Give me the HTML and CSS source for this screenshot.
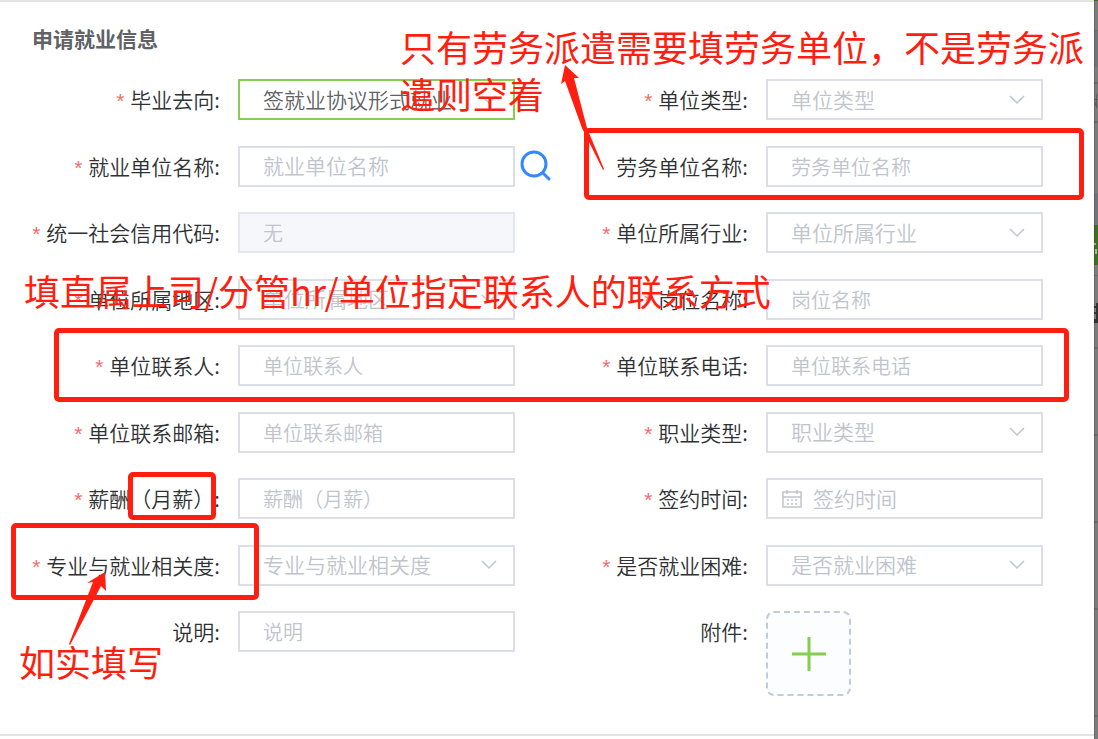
FILE: index.html
```html
<!DOCTYPE html>
<html lang="zh-CN">
<head>
  <meta charset="UTF-8">
  <meta name="viewport" content="width=device-width, initial-scale=1">
  <title>申请就业信息</title>
  <link rel="stylesheet" href="styles.css">
</head>
<body>
  <div class="page">
    <main class="dialog">
      <h1 class="title">申请就业信息</h1>
      <form class="form">
        <div class="item">
          <label class="required" for="direction">毕业去向:</label>
          <div class="control">
            <select id="direction" class="active"><option>签就业协议形式就业</option></select>
            <svg class="arrow" viewBox="0 0 16 10"><path d="M1 1l7 7 7-7"/></svg>
          </div>
        </div>
        <div class="item">
          <label class="required" for="unit-type">单位类型:</label>
          <div class="control">
            <select id="unit-type"><option>单位类型</option></select>
            <svg class="arrow" viewBox="0 0 16 10"><path d="M1 1l7 7 7-7"/></svg>
          </div>
        </div>

        <div class="item">
          <label class="required" for="unit-name">就业单位名称:</label>
          <div class="control"><input id="unit-name" class="wide" type="text" placeholder="就业单位名称"></div>
          <button class="search" type="button" aria-label="搜索">
            <svg viewBox="0 0 32 32"><circle cx="14" cy="14" r="12"/><path d="M23 23l6 6"/></svg>
          </button>
        </div>
        <div class="item">
          <label for="labor-name">劳务单位名称:</label>
          <div class="control"><input id="labor-name" type="text" placeholder="劳务单位名称"></div>
        </div>

        <div class="item">
          <label class="required" for="credit-code">统一社会信用代码:</label>
          <div class="control"><input id="credit-code" type="text" placeholder="无" disabled></div>
        </div>
        <div class="item">
          <label class="required" for="industry">单位所属行业:</label>
          <div class="control">
            <select id="industry"><option>单位所属行业</option></select>
            <svg class="arrow" viewBox="0 0 16 10"><path d="M1 1l7 7 7-7"/></svg>
          </div>
        </div>

        <div class="item">
          <label class="required" for="region">单位所属地区:</label>
          <div class="control">
            <select id="region"><option>单位所属地区</option></select>
            <svg class="arrow" viewBox="0 0 16 10"><path d="M1 1l7 7 7-7"/></svg>
          </div>
        </div>
        <div class="item">
          <label class="required" for="job-name">岗位名称:</label>
          <div class="control"><input id="job-name" type="text" placeholder="岗位名称"></div>
        </div>

        <div class="item">
          <label class="required" for="contact">单位联系人:</label>
          <div class="control"><input id="contact" type="text" placeholder="单位联系人"></div>
        </div>
        <div class="item">
          <label class="required" for="phone">单位联系电话:</label>
          <div class="control"><input id="phone" type="text" placeholder="单位联系电话"></div>
        </div>

        <div class="item">
          <label class="required" for="email">单位联系邮箱:</label>
          <div class="control"><input id="email" type="text" placeholder="单位联系邮箱"></div>
        </div>
        <div class="item">
          <label class="required" for="job-type">职业类型:</label>
          <div class="control">
            <select id="job-type"><option>职业类型</option></select>
            <svg class="arrow" viewBox="0 0 16 10"><path d="M1 1l7 7 7-7"/></svg>
          </div>
        </div>

        <div class="item">
          <label class="required" for="salary">薪酬（月薪）:</label>
          <div class="control"><input id="salary" type="text" placeholder="薪酬（月薪）"></div>
        </div>
        <div class="item">
          <label class="required" for="sign-date">签约时间:</label>
          <div class="control">
            <input id="sign-date" class="date" type="text" placeholder="签约时间">
            <svg class="calendar" viewBox="0 0 20 20"><path d="M1 3h18v15H1zM1 8h18M5 1v4M15 1v4M5 11h2M9 11h2M13 11h2M5 15h2M9 15h2M13 15h2"/></svg>
          </div>
        </div>

        <div class="item">
          <label class="required" for="relevance">专业与就业相关度:</label>
          <div class="control">
            <select id="relevance"><option>专业与就业相关度</option></select>
            <svg class="arrow" viewBox="0 0 16 10"><path d="M1 1l7 7 7-7"/></svg>
          </div>
        </div>
        <div class="item">
          <label class="required" for="difficulty">是否就业困难:</label>
          <div class="control">
            <select id="difficulty"><option>是否就业困难</option></select>
            <svg class="arrow" viewBox="0 0 16 10"><path d="M1 1l7 7 7-7"/></svg>
          </div>
        </div>

        <div class="item">
          <label for="remark">说明:</label>
          <div class="control"><input id="remark" type="text" placeholder="说明"></div>
        </div>
        <div class="item">
          <label for="attachment">附件:</label>
          <div class="control">
            <button id="attachment" class="upload" type="button" aria-label="上传附件">
              <svg viewBox="0 0 36 36"><path d="M18 1v34M1 18h34"/></svg>
            </button>
          </div>
        </div>
      </form>
    </main>

    <!-- strip of the dimmed page behind the dialog -->
    <svg class="backdrop" viewBox="0 0 4 739" preserveAspectRatio="none">
      <path fill="#7c7c7c" d="M0 0h4v739H0z"/>
      <path fill="#3f7020" d="M0 0h4v1H0zM0 225h4v40H0z"/>
      <path fill="#70757b" d="M0 31h4v36H0zM0 193h4v32H0z"/>
      <path fill="#6c6c6c" d="M0 30h4v1H0zM0 82h4v2H0zM0 121h4v2H0zM0 275h4v1H0zM0 347h4v2H0zM0 434h4v2H0zM0 521h4v2H0zM0 608h4v2H0zM0 715h4v2H0z"/>
      <path fill="#5c5d60" d="M2 94h1v14H2zM0 99h4v1H0zM1 102h1v4H1z"/>
      <path fill="#a5b79b" d="M0 243h2v2H0zM1 249h2v5H1z"/>
      <path fill="#333" d="M2 303h2v20H2zM0 306h4v2H0zM0 312h4v2H0zM0 319h3v4H0z"/>
      <path fill="#000" fill-opacity=".15" d="M0 0h1v739H0z"/>
    </svg>

    <!-- notes over the form -->
    <div class="frame frame-labor"></div>
    <div class="frame frame-contact"></div>
    <div class="frame frame-salary"></div>
    <div class="frame frame-relevance"></div>
    <svg class="pointer pointer-labor" viewBox="0 0 44 105"><path d="M5 0L19 13 14 13 27 63 44 104 43 105 22 63 5 16 1 19z"/></svg>
    <svg class="pointer pointer-relevance" viewBox="0 0 38 74"><path d="M36 1L37 20 32 15 1 74 0 73 24 11 18 12z"/></svg>
    <p class="note note-labor">只有劳务派遣需要填劳务单位，不是劳务派<br>遣则空着</p>
    <p class="note note-contact">填直属上司/分管hr/单位指定联系人的联系方式</p>
    <p class="note note-relevance">如实填写</p>
  </div>
</body>
</html>
```
FILE: styles.css
```css
* {
  margin: 0;
  padding: 0;
  box-sizing: border-box;
}
body {
  font-family: "Noto Sans CJK SC", sans-serif;
  font-size: 21px;
  font-weight: 350;
  color: #303133;
  background: #fff;
}
.page {
  position: relative;
  display: flex;
  min-height: 100vh;
}
.dialog {
  flex: 1;
  display: flex;
  flex-direction: column;
  margin-bottom: 3px;
  padding: 22px 28px 38px 10px;
  border-top: 2px solid #e4e4e4;
  border-bottom: 2px solid #e4e4e4;
}
.title {
  margin: 0 0 27px 22px;
  font-size: 21px;
  line-height: 28px;
  font-weight: bold;
  color: #606266;
}
.backdrop {
  width: 4px;
  align-self: stretch;
  flex: none;
}

/* Form grid */
.form {
  flex: 1;
  display: grid;
  grid-template-columns: 1fr 1fr;
  grid-template-rows: repeat(8, 1fr) auto;
}
.item {
  display: grid;
  grid-template-columns: 228px 1fr 23px;
  align-items: start;
}
.item label {
  padding-right: 18px;
  line-height: 40px;
  text-align: right;
  white-space: nowrap;
}
.required::before {
  content: "*";
  margin-right: 6px;
  font-family: "Liberation Sans", sans-serif;
  color: #f56c6c;
}
.control {
  display: grid;
  align-items: center;
}
.control > * {
  grid-area: 1 / 1;
}
input, select {
  width: 100%;
  height: 41px;
  padding: 0 23px 2px;
  border: 2px solid #dcdfe6;
  border-radius: 0;
  background: #fff;
  font: inherit;
  color: #c0c4cc;
  appearance: none;
  outline: none;
}
input {
  padding-bottom: 0;
  font-size: 20px;
  color: #606266;
}
input.wide, input.date {
  padding-bottom: 2px;
  font-size: 21px;
}
input.date {
  padding-left: 45px;
}
input::placeholder {
  color: #c0c4cc;
  opacity: 1;
}
input:disabled {
  background: #f5f7fa;
  border-color: #e4e7ed;
}
select.active {
  border-color: #85ce4f;
  color: #606266;
}
.arrow, .calendar {
  fill: none;
  stroke: #c0c4cc;
  stroke-width: 1.5;
  pointer-events: none;
}
.arrow {
  width: 16px;
  height: 10px;
  margin-right: 18px;
  justify-self: end;
}
.calendar {
  width: 20px;
  height: 20px;
  margin-left: 16px;
}
.search {
  width: 32px;
  height: 32px;
  margin: 4px 0 0 5px;
  border: 0;
  background: none;
}
.search svg {
  display: block;
  fill: none;
  stroke: #3487ff;
  stroke-width: 3;
  stroke-linecap: round;
}
.upload {
  display: flex;
  align-items: center;
  justify-content: center;
  width: 85px;
  height: 85px;
  border: 2px dashed #c0ccda;
  border-radius: 8px;
  background: #fbfdff;
}
.upload svg {
  width: 36px;
  height: 36px;
  stroke: #85ce4f;
  stroke-width: 3;
}

/* Red notes */
.frame {
  position: absolute;
  border: 5px solid #ff1e10;
  border-radius: 5px;
}
.frame-labor {
  left: 584px;
  top: 128px;
  width: 500px;
  height: 72px;
}
.frame-contact {
  left: 54px;
  top: 328px;
  width: 1015px;
  height: 74px;
}
.frame-salary {
  left: 128px;
  top: 472px;
  width: 88px;
  height: 48px;
}
.frame-relevance {
  left: 11px;
  top: 523px;
  width: 248px;
  height: 77px;
}
.pointer {
  position: absolute;
  fill: #ff1e10;
}
.pointer-labor {
  left: 560px;
  top: 65px;
  width: 44px;
}
.pointer-relevance {
  left: 69px;
  top: 571px;
  width: 38px;
}
.note {
  position: absolute;
  font-size: 36px;
  font-weight: 400;
  line-height: 47px;
  color: #ff1e10;
  white-space: nowrap;
}
.note-labor {
  left: 400px;
  top: 23px;
}
.note-contact {
  left: 24px;
  top: 267px;
}
.note-relevance {
  left: 19px;
  top: 638px;
}
```
